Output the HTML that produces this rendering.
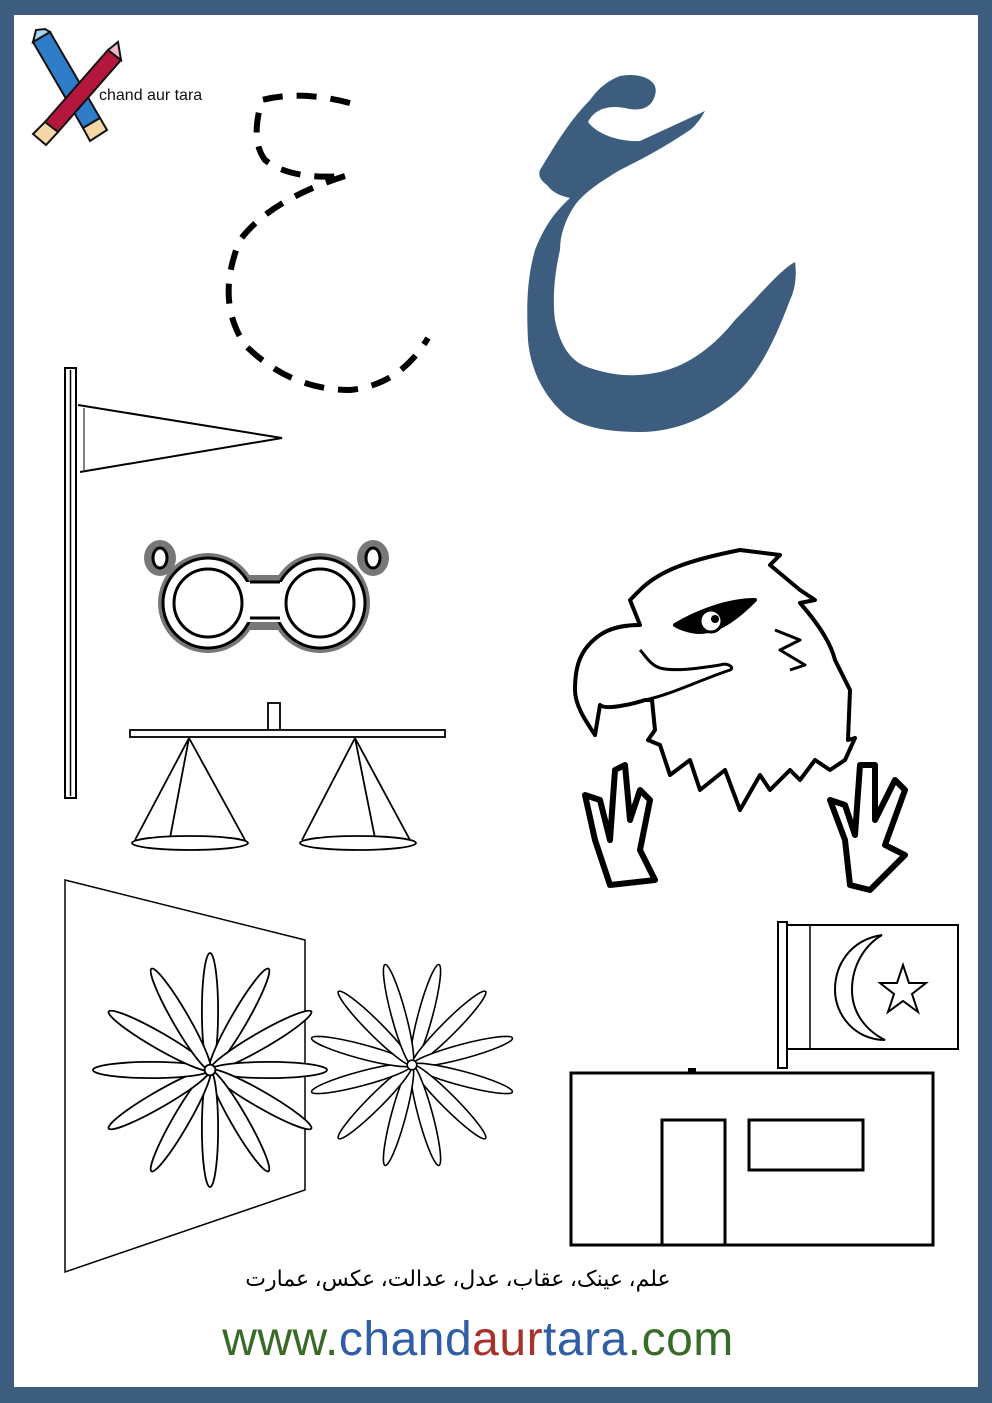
<!DOCTYPE html>
<html><head><meta charset="utf-8"><style>
html,body{margin:0;padding:0;background:#3d5d7e;}
.page{position:absolute;left:14px;top:15px;width:964px;height:1372px;background:#fff;}
svg{position:absolute;left:0;top:0;}
.logo{position:absolute;left:99px;top:87px;font:16px "Liberation Sans",sans-serif;color:#111;}
.urdu{position:absolute;left:-38px;width:992px;text-align:center;top:1266px;font:22px "Liberation Serif","DejaVu Sans",serif;color:#000;direction:rtl;}
.url{position:absolute;left:-2px;width:960px;text-align:center;top:1312px;font:48px "Liberation Sans",sans-serif;letter-spacing:0.5px;}
</style></head><body>
<div class="page"></div>
<svg width="992" height="1403" viewBox="0 0 992 1403">
<g stroke="#111" stroke-width="2">
<path d="M33,42 L50,32 L100,118 L83,128 Z" fill="#2f7cc8"/>
<path d="M83,128 L100,118 L107,130 L90,141 Z" fill="#f5d7a8"/>
<path d="M33,42 L36,30 L45,29 L50,32 Z" fill="#a9d4f5"/>
<path d="M108,50 L121,60 L58,132 L45,122 Z" fill="#b5163c"/>
<path d="M45,122 L58,132 L46,145 L33,134 Z" fill="#f5d7a8"/>
<path d="M108,50 L118,42 L121,60 Z" fill="#f5b8c8"/>
</g>
<path d="M350,103 Q300,90 262,100 Q250,140 265,160 Q290,180 345,176 M345,176 Q270,200 240,240 Q215,300 245,345 Q290,390 350,390 Q400,385 428,338" fill="none" stroke="#000" stroke-width="6" stroke-dasharray="20,14"/>
<path d="M620,76 C640,72 660,80 655,95 C652,108 640,112 625,108 C610,105 595,108 588,122 C598,135 620,142 640,141 L705,111 C700,120 695,126 690,130 C660,150 640,160 620,170 C600,182 585,192 575,205 C565,220 560,235 560,250 C553,280 553,305 555,320 C560,345 570,362 590,368 C620,378 640,376 660,372 C690,365 715,345 735,320 C760,295 780,270 795,262 C797,275 795,290 790,300 C775,340 760,370 740,390 C710,418 675,432 640,432 C600,432 575,425 560,410 C540,390 530,365 528,340 C526,300 528,275 535,250 C545,225 555,212 570,198 C560,196 552,192 547,185 C540,180 538,175 540,170 C555,145 570,120 590,100 C600,86 610,80 620,76 Z" fill="#3d5d7e"/>
<rect x="65" y="368" width="11" height="430" fill="#fff" stroke="#000" stroke-width="2"/>
<line x1="70.5" y1="370" x2="70.5" y2="796" stroke="#000" stroke-width="1.5"/>
<path d="M78,405 L282,438 L80,472" fill="none" stroke="#000" stroke-width="2"/>
<line x1="84" y1="408" x2="84" y2="470" stroke="#000" stroke-width="1"/>
<g fill="none">
<circle cx="208" cy="603" r="50" fill="#777"/>
<circle cx="320" cy="603" r="50" fill="#777"/>
<ellipse cx="160" cy="558" rx="16" ry="18" fill="#777"/>
<ellipse cx="373" cy="558" rx="16" ry="18" fill="#777"/>
<rect x="240" y="575" width="50" height="55" fill="#777"/>
<circle cx="208" cy="603" r="45" fill="#fff" stroke="#000" stroke-width="3"/>
<circle cx="320" cy="603" r="45" fill="#fff" stroke="#000" stroke-width="3"/>
<rect x="245" y="582" width="40" height="40" fill="#fff"/>
<line x1="250" y1="582" x2="280" y2="582" stroke="#000" stroke-width="3"/>
<line x1="250" y1="618" x2="280" y2="618" stroke="#000" stroke-width="3"/>
<circle cx="208" cy="603" r="34" stroke="#000" stroke-width="3"/>
<circle cx="320" cy="603" r="34" stroke="#000" stroke-width="3"/>
<ellipse cx="160" cy="558" rx="7" ry="10" fill="#fff" stroke="#000" stroke-width="3"/>
<ellipse cx="373" cy="558" rx="7" ry="10" fill="#fff" stroke="#000" stroke-width="3"/>
</g>
<g fill="#fff" stroke="#000" stroke-width="1.8">
<rect x="268" y="703" width="12" height="28"/>
<rect x="130" y="730" width="315" height="7"/>
<path d="M189,738 L135,840 M189,738 L245,840 M189,738 L170,838" fill="none"/>
<ellipse cx="190" cy="843" rx="58" ry="7"/>
<path d="M355,738 L302,840 M355,738 L410,840 M355,738 L375,838" fill="none"/>
<ellipse cx="358" cy="843" rx="58" ry="7"/>
</g>
<g fill="#fff" stroke="#000" stroke-width="4" stroke-linejoin="round">
<path d="M640,625 L630,600 L640,590 C660,570 690,560 740,550 L780,555 L770,565 L800,590 L815,600 L800,603 C815,620 830,640 835,660 L850,690 L848,740 L855,738 L845,760 L830,770 L815,760 L800,780 L790,770 L770,790 L760,775 L740,810 L725,770 L700,790 L690,760 L670,775 L660,745 L648,740 L655,730 L652,700 L645,700 C630,705 605,710 600,705 L595,735 C585,720 575,705 575,690 C575,670 578,650 600,635 C610,628 625,625 640,625 Z"/>
<path d="M645,700 C670,695 700,680 730,670 C735,668 728,662 720,665 C700,668 675,672 660,668 C650,665 645,655 640,650" fill="none" stroke-width="3"/>
<path d="M675,625 C700,610 730,600 755,600 C740,615 720,632 700,632 C690,632 680,628 675,625 Z" fill="#000"/>
<circle cx="711" cy="621" r="11" fill="#fff" stroke-width="3"/>
<circle cx="715" cy="619" r="4" fill="#000" stroke="none"/>
<path d="M775,630 L800,640 L780,650 L805,665 L790,670" fill="none" stroke-width="3"/>
</g>
<g fill="#fff" stroke="#000" stroke-width="6" stroke-linejoin="round">
<path d="M610,885 L595,840 L585,795 L600,800 L610,840 L615,770 L625,765 L630,820 L640,790 L650,800 L640,850 L655,880 Z" />
<path d="M850,885 L845,840 L830,800 L845,805 L855,835 L860,765 L875,765 L875,820 L895,780 L905,790 L885,845 L905,855 L870,890 Z"/>
</g>
<path d="M65,880 L305,940 L305,1190 L65,1272 Z" fill="none" stroke="#000" stroke-width="1.5"/>
<g fill="#fff" stroke="#000" stroke-width="2">
<g transform="translate(210,1070) scale(0.9)">
<ellipse cx="0" cy="-65" rx="9" ry="65"/>
<ellipse cx="0" cy="-65" rx="9" ry="65" transform="rotate(30)"/>
<ellipse cx="0" cy="-65" rx="9" ry="65" transform="rotate(60)"/>
<ellipse cx="0" cy="-65" rx="9" ry="65" transform="rotate(90)"/>
<ellipse cx="0" cy="-65" rx="9" ry="65" transform="rotate(120)"/>
<ellipse cx="0" cy="-65" rx="9" ry="65" transform="rotate(150)"/>
<ellipse cx="0" cy="-65" rx="9" ry="65" transform="rotate(180)"/>
<ellipse cx="0" cy="-65" rx="9" ry="65" transform="rotate(210)"/>
<ellipse cx="0" cy="-65" rx="9" ry="65" transform="rotate(240)"/>
<ellipse cx="0" cy="-65" rx="9" ry="65" transform="rotate(270)"/>
<ellipse cx="0" cy="-65" rx="9" ry="65" transform="rotate(300)"/>
<ellipse cx="0" cy="-65" rx="9" ry="65" transform="rotate(330)"/>
<circle r="6"/>
</g>
<g transform="translate(412,1065) scale(0.8)">
<ellipse cx="0" cy="-65" rx="9" ry="65" transform="rotate(15)"/>
<ellipse cx="0" cy="-65" rx="9" ry="65" transform="rotate(45)"/>
<ellipse cx="0" cy="-65" rx="9" ry="65" transform="rotate(75)"/>
<ellipse cx="0" cy="-65" rx="9" ry="65" transform="rotate(105)"/>
<ellipse cx="0" cy="-65" rx="9" ry="65" transform="rotate(135)"/>
<ellipse cx="0" cy="-65" rx="9" ry="65" transform="rotate(165)"/>
<ellipse cx="0" cy="-65" rx="9" ry="65" transform="rotate(195)"/>
<ellipse cx="0" cy="-65" rx="9" ry="65" transform="rotate(225)"/>
<ellipse cx="0" cy="-65" rx="9" ry="65" transform="rotate(255)"/>
<ellipse cx="0" cy="-65" rx="9" ry="65" transform="rotate(285)"/>
<ellipse cx="0" cy="-65" rx="9" ry="65" transform="rotate(315)"/>
<ellipse cx="0" cy="-65" rx="9" ry="65" transform="rotate(345)"/>
<circle r="6"/>
</g>
</g>
<g fill="none" stroke="#000" stroke-width="3">
<rect x="571" y="1073" width="362" height="172"/>
<rect x="662" y="1120" width="63" height="125"/>
<rect x="749" y="1120" width="114" height="50"/>
<rect x="778" y="922" width="9" height="146" stroke-width="2"/>
<rect x="787" y="925" width="171" height="124" stroke-width="2"/>
<line x1="810" y1="925" x2="810" y2="1049" stroke-width="1.5"/>
<path d="M882,935 C850,940 835,965 835,990 C835,1015 855,1040 885,1040 C865,1030 852,1012 852,990 C852,965 865,945 882,935 Z" stroke-width="2"/>
<path d="M903,965 L909,983 L926,983 L912,994 L918,1012 L903,1001 L888,1012 L894,994 L880,983 L897,983 Z" stroke-width="2"/>
</g>
<rect x="688" y="1068" width="8" height="5" fill="#000"/>
</svg>
<div class="logo">chand aur tara</div>
<div class="urdu">علم، عینک، عقاب، عدل، عدالت، عکس، عمارت</div>
<div class="url"><span style="color:#386b27">www.</span><span style="color:#2f5ea6">chand</span><span style="color:#a8322a">aur</span><span style="color:#2f5ea6">tara</span><span style="color:#386b27">.com</span></div>
</body></html>
